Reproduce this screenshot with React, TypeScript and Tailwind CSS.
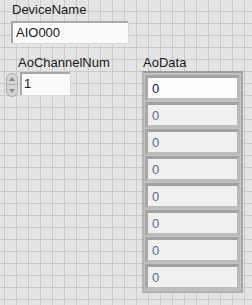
import React from "react";

const font = { fontFamily: '"Liberation Sans", Arial, sans-serif' };

function Elem({ first, last }: { first?: boolean; last?: boolean }) {
  return (
    <div
      className={
        "h-[26px] border-[3px] border-t-[#a2a2a2] border-l-[#a8a8a8] border-r-[#b9b9b9] border-b-[#bdbdbd] flex items-center pl-[4px] text-[13px] leading-[15px] " +
        (last ? "" : "mb-[1px] ") +
        (first ? "bg-[#fbfbfb] text-[#10204a]" : "bg-[#f0f0f0] text-[#5c6b8a]")
      }
    >
      0
    </div>
  );
}

export default function App() {
  return (
    <div
      className="w-[252px] h-[305px] overflow-hidden bg-[#e4e4e4] bg-[linear-gradient(to_right,#cacaca_1px,transparent_1px),linear-gradient(to_bottom,#cacaca_1px,transparent_1px)] bg-[size:12px_12px] bg-[position:4px_11px] text-[#1a1a1a]"
      style={font}
    >
      <div className="pt-[2px] pl-[12px] text-[13px] leading-[15px]">DeviceName</div>
      <div className="ml-[11px] mt-[4px] w-[118px] h-[23px] bg-[#fafafa] shadow-[inset_2px_2px_0_#a8a8a8] border-r-[1px] border-b-[1px] border-[#d8d8d8] flex items-center pl-[5px] text-[13px] leading-[15px]">
        AIO000
      </div>
      <div className="flex mt-[11px]">
        <div className="w-[142px]">
          <div className="pl-[18px] text-[13px] leading-[15px]">AoChannelNum</div>
          <div className="flex mt-[2px] ml-[6px]">
            <div className="flex flex-col w-[12px] mt-[1px]">
              <div className="h-[12px] rounded-t-[6px] bg-[#d4d4d4] border border-[#b0b0b0] flex items-center justify-center">
                <div className="w-0 h-0 border-l-[3px] border-r-[3px] border-b-[4px] border-l-transparent border-r-transparent border-b-[#8a8a8a]" />
              </div>
              <div className="h-[12px] rounded-b-[6px] bg-[#d4d4d4] border border-t-0 border-[#b0b0b0] flex items-center justify-center">
                <div className="w-0 h-0 border-l-[3px] border-r-[3px] border-t-[4px] border-l-transparent border-r-transparent border-t-[#8a8a8a]" />
              </div>
            </div>
            <div className="ml-[2px] w-[51px] h-[24px] bg-[#fafafa] shadow-[inset_2px_2px_0_#a8a8a8] border-r-[1px] border-b-[1px] border-[#d8d8d8] flex items-center pl-[4px] text-[13px] leading-[15px]">
              1
            </div>
          </div>
        </div>
        <div>
          <div className="pl-[1px] text-[13px] leading-[15px]">AoData</div>
          <div className="mt-[1px] w-[101px] bg-[#c4c4c4] border-t-[2px] border-t-[#9c9c9c] border-l-[2px] border-l-[#b4b4b4] border-r-[2px] border-r-[#a9a9a9] border-b-[2px] border-b-[#b0b0b0] pt-[2px] pl-[1px] pr-[1px] pb-[1px]">
            <Elem first />
            <Elem />
            <Elem />
            <Elem />
            <Elem />
            <Elem />
            <Elem />
            <Elem last />
          </div>
        </div>
      </div>
    </div>
  );
}
